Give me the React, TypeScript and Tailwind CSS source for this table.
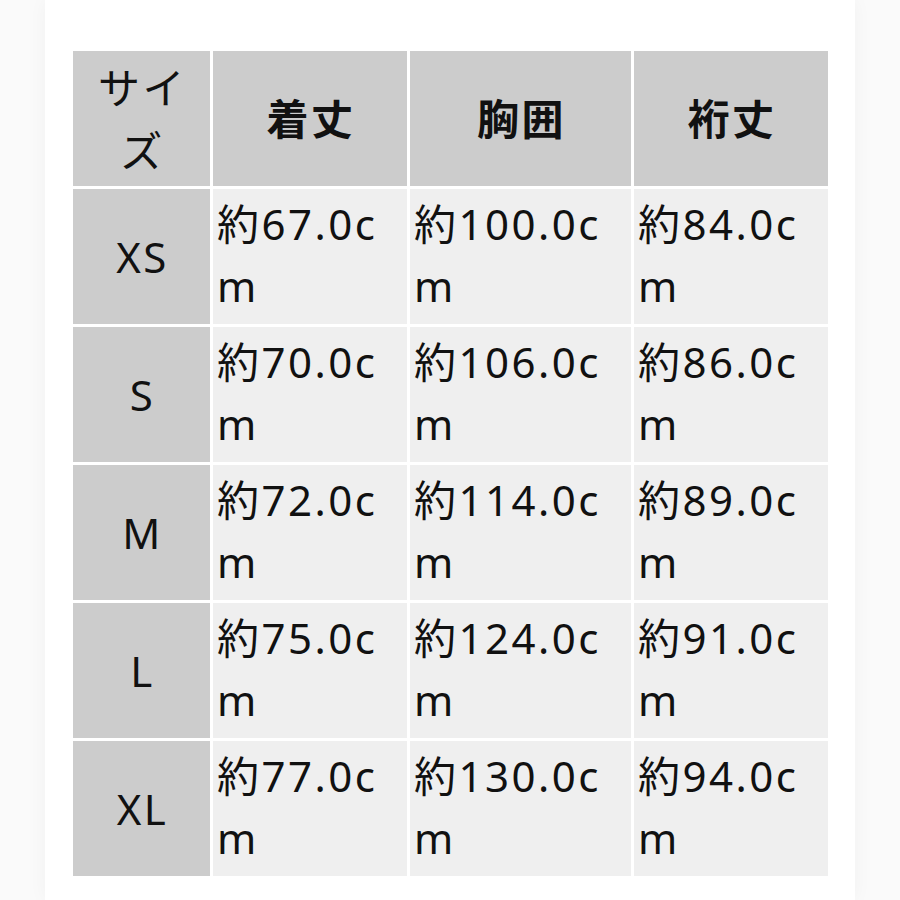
const rows = [
  { size: 'XS', length: '約67.0cm', chest: '約100.0cm', sleeve: '約84.0cm' },
  { size: 'S', length: '約70.0cm', chest: '約106.0cm', sleeve: '約86.0cm' },
  { size: 'M', length: '約72.0cm', chest: '約114.0cm', sleeve: '約89.0cm' },
  { size: 'L', length: '約75.0cm', chest: '約124.0cm', sleeve: '約91.0cm' },
  { size: 'XL', length: '約77.0cm', chest: '約130.0cm', sleeve: '約94.0cm' },
];

const headers = ['着丈', '胸囲', '裄丈'];

function DataCell({ value }: { value: string }) {
  return (
    <div className="bg-[#efefef] pl-[4px] pr-[8px] pt-[4px] leading-[62px] break-all">
      {value}
    </div>
  );
}

export default function App() {
  return (
    <div
      className="w-[900px] h-[900px] bg-[#fafafa] flex justify-center text-[#111] text-[42px] tracking-[2.5px]"
      style={{ fontFamily: "'Noto Sans', 'Noto Sans CJK JP', sans-serif" }}
    >
      <div className="w-[810px] h-full bg-white shadow-[0_0_18px_rgba(0,0,0,0.04)] pl-[28px] pt-[51px]">
        <div className="grid grid-cols-[137px_194px_221px_194px] auto-rows-[135px] gap-[3px]">
          {/* Header */}
          <div className="bg-[#cccccc] flex items-center justify-center text-center">
            <span className="max-w-[110px] leading-[63px] pl-[2px]">サイズ</span>
          </div>
          {headers.map(h => (
            <div key={h} className="bg-[#cccccc] flex items-center justify-center font-bold pl-[2px]">
              {h}
            </div>
          ))}

          {/* Rows */}
          {rows.map(r => (
            <div key={r.size} className="contents">
              <div className="bg-[#cccccc] flex items-center justify-center pl-[2px]">{r.size}</div>
              <DataCell value={r.length} />
              <DataCell value={r.chest} />
              <DataCell value={r.sleeve} />
            </div>
          ))}
        </div>
      </div>
    </div>
  );
}
